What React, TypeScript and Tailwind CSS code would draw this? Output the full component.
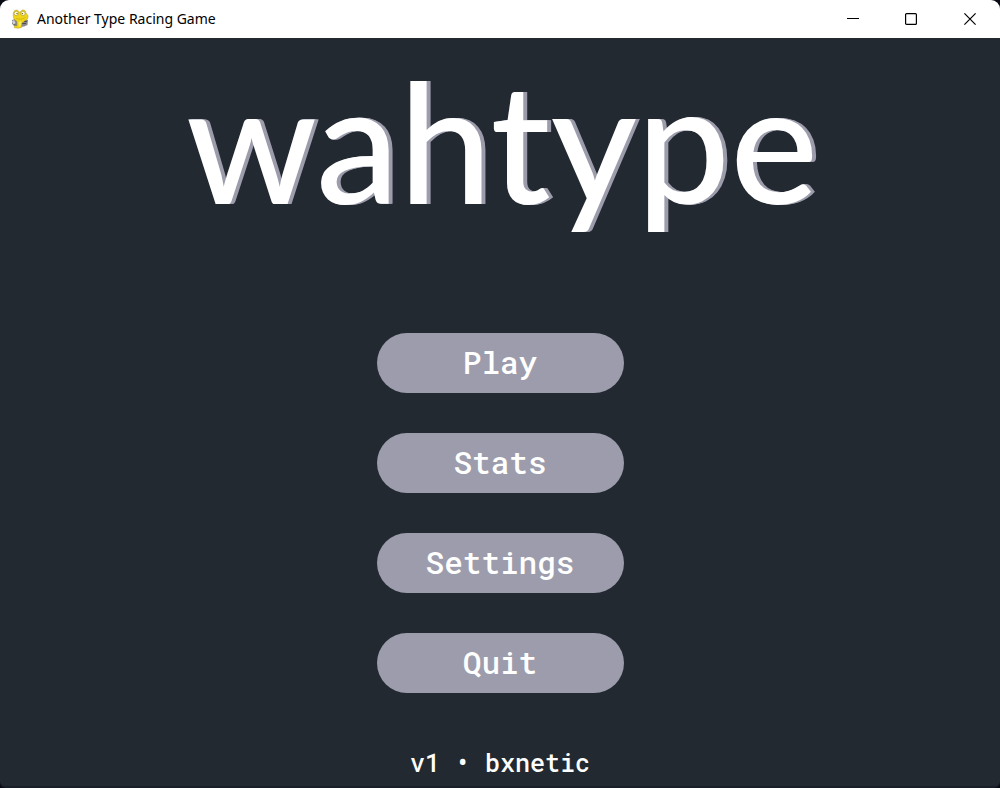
import React from "react";

const menu = ["Play", "Stats", "Settings", "Quit"];

function SnakeIcon() {
  return (
    <svg className="h-5 w-5 shrink-0" viewBox="0 0 20 20" aria-hidden="true">
      <path d="M2 11l3-1 3 1 6-1 4 1-.5 5-3.500 1.500-4 .5-5-1-3-2z" fill="#8a8990" />
      <path d="M2 12.500l2-1.500 1.500 3-2 1.500zM13 11.500h2v1.500h-2z" fill="#d3d3da" />
      <path d="M12 14.500h4M14 12.500h3M3.500 16h2" stroke="#4e4d55" strokeWidth="1" />
      <path d="M4 10Q2.500 7 3.500 3.500Q4.200 .4 7 1L9.800 3.200 12.200 1Q15.500 .4 16 4L18 6.500Q18.700 10.500 14.500 12L12 14 11.500 18.500Q8 20 4 18.500L4.800 16.500 7 17 7 12.500Z" fill="#f0d516" stroke="#a38c18" strokeWidth=".4" />
      <circle cx="6.300" cy="4.400" r="2.200" fill="#fcf9dc" stroke="#9a851a" strokeWidth=".5" />
      <circle cx="12.900" cy="4.400" r="2.200" fill="#fcf9dc" stroke="#9a851a" strokeWidth=".5" />
      <circle cx="7" cy="4.600" r=".7" fill="#4a4210" />
      <circle cx="12.300" cy="4.600" r=".7" fill="#4a4210" />
      <path d="M6 9.500q5 2 9.500-1" fill="none" stroke="#bda31a" strokeWidth=".6" />
      <path d="M8.500 13l2.500-1v4l-2 2z" fill="#fbef4c" />
    </svg>
  );
}

function TitleBar() {
  const control = "flex h-full w-[58px] items-center justify-center";
  return (
    <header className="flex h-[38px] shrink-0 items-center bg-white pl-2.5 text-black">
      <SnakeIcon />
      <span className="ml-[7px] grow pb-0.5 font-['Noto_Sans','Open_Sans',sans-serif] text-[14px]">
        Another Type Racing Game
      </span>
      <button type="button" aria-label="Minimize" className={control}>
        <svg width="12" height="12" viewBox="0 0 12 12">
          <path d="M0 5.500h12" stroke="currentColor" />
        </svg>
      </button>
      <button type="button" aria-label="Maximize" className={control}>
        <svg width="12" height="12" viewBox="0 0 12 12">
          <rect x=".6" y=".6" width="10.800" height="10.800" rx="1" fill="none" stroke="currentColor" strokeWidth="1.200" />
        </svg>
      </button>
      <button type="button" aria-label="Close" className="flex h-full w-[60px] items-center justify-center">
        <svg width="12" height="12" viewBox="0 0 12 12">
          <path d="M.4.400l11.200 11.200M11.600.400L.4 11.600" stroke="currentColor" strokeWidth="1.200" />
        </svg>
      </button>
    </header>
  );
}

export default function App() {
  return (
    <div className="min-h-screen bg-[#080a14]">
      <div className="flex min-h-screen flex-col overflow-hidden rounded-t-[9px] rounded-b-md border-b-2 border-[#1b1f2a] bg-[#222930]">
        <TitleBar />
        <main className="flex grow flex-col items-center text-white">
          <h1 className="mt-2 pl-1 font-['Lato',sans-serif] text-[166px] leading-[188px] font-medium [text-shadow:1px_0_#9c9cac,2px_0_#9c9cac,3px_0_#9c9cac,4px_0_#9c9cac]">
            wahtype
          </h1>
          <nav className="mt-[99px] flex flex-col gap-10 font-['Roboto_Mono','DejaVu_Sans_Mono',monospace] font-medium">
            {menu.map((label) => (
              <button key={label} type="button" className="h-[60px] w-[247px] rounded-full bg-[#9c9cac] pb-0.5 text-[31px] leading-[58px]">
                {label}
              </button>
            ))}
          </nav>
          <footer className="mt-auto pb-[5px] font-['Roboto_Mono','DejaVu_Sans_Mono',monospace] text-[25px] leading-[36px] font-medium">
            v1 • bxnetic
          </footer>
        </main>
      </div>
    </div>
  );
}
